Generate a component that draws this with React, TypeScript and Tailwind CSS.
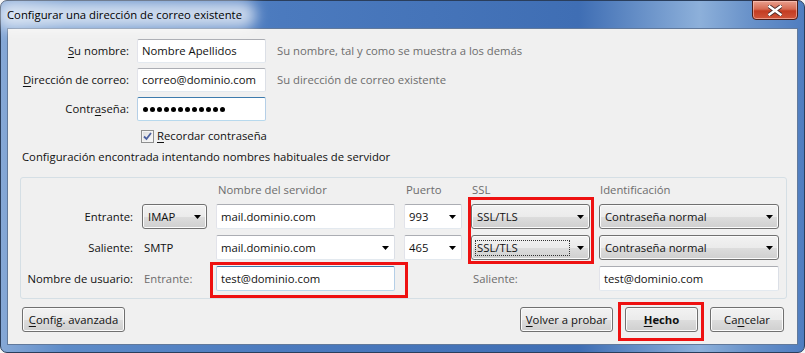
import React from "react";

const btnBg =
  "border border-[#707070] rounded-[3px] bg-[linear-gradient(180deg,#f2f2f2_0%,#ebebeb_50%,#dddddd_51%,#cfcfcf_100%)] shadow-[inset_0_0_0_1px_#fbfbfb]";
const textBox =
  "bg-white border border-[#abadb3] border-l-[#e2e3ea] border-r-[#dbdfe6] border-b-[#e3e9ef] rounded-[2px]";
const focusBox =
  "bg-white border border-[#3d7bad] border-l-[#b5cfe7] border-r-[#b5cfe7] border-b-[#b7d9ed] rounded-[2px]";

function Arrow() {
  return (
    <svg width="7" height="4" viewBox="0 0 7 4" className="shrink-0">
      <path d="M0 0H7L3.5 4Z" fill="#000" />
    </svg>
  );
}

function U({ children }: { children: React.ReactNode }) {
  return <span className="underline underline-offset-2">{children}</span>;
}

function SelectBtn({ text, focus }: { text: string; focus?: boolean }) {
  return (
    <div className={`h-full flex items-center justify-between pl-[3px] pr-[5px] ${btnBg}`}>
      {focus ? (
        <span className="h-[16px] w-[95px] flex items-center pl-[1px] border border-dotted border-[#333]">
          {text}
        </span>
      ) : (
        <span className="pl-[2px]">{text}</span>
      )}
      <Arrow />
    </div>
  );
}

function Combo({ text }: { text: string }) {
  return (
    <div className={`h-full flex items-center justify-between pl-[4px] pr-[5px] ${textBox}`}>
      <span>{text}</span>
      <Arrow />
    </div>
  );
}

function Input({ text, focus, className = "" }: { text: string; focus?: boolean; className?: string }) {
  return (
    <div className={`h-full flex items-center pl-[4px] whitespace-nowrap ${focus ? focusBox : textBox} ${className}`}>
      {text}
    </div>
  );
}

function Button({ children, w, bold }: { children: React.ReactNode; w: string; bold?: boolean }) {
  return (
    <div className={`h-[25px] ${w} flex items-center justify-center ${btnBg} ${bold ? "font-bold" : ""}`}>
      {children}
    </div>
  );
}

export default function App() {
  return (
    <div className="w-[805px] h-[353px] bg-[#f4f4f4] relative overflow-hidden text-[11.3px] leading-[16px] text-[#111] whitespace-nowrap font-['Open_Sans','Segoe_UI',sans-serif]">
      <div className="w-full h-full rounded-[7px] border border-[#2a3e5c] bg-[linear-gradient(90deg,#86a8d6_0%,#5d8bc8_8%,#4b7abe_35%,#3f6eb4_72%,#8db0da_87%,#6a93ca_93%,#4f7dc0_100%)] flex flex-col">
        {/* title bar */}
        <div className="h-[27px] shrink-0 flex items-start justify-between relative">
          <div className="relative ml-[6px] mt-[6px]">
            <div className="absolute -left-[10px] -right-[14px] -top-[6px] -bottom-[6px] rounded-[14px] bg-white/70 blur-[7px]" />
            <span className="relative text-[#000]">Configurar una dirección de correo existente</span>
          </div>
          <div className="mr-[6px] -mt-[1px] w-[46px] h-[20px] rounded-b-[4px] border border-[#4b1d18] bg-[linear-gradient(180deg,#e9a08e_0%,#d66a52_45%,#c33c22_55%,#d0553a_100%)] shadow-[inset_0_0_0_1px_rgba(255,210,200,0.55)] flex items-center justify-center">
            <svg width="14" height="11" viewBox="0 0 14 11">
              <path
                d="M1.5 1.5L12.5 9.5M12.5 1.5L1.5 9.5"
                stroke="#4a2a28"
                strokeWidth="4.2"
                strokeLinecap="square"
              />
              <path
                d="M1.5 1.5L12.5 9.5M12.5 1.5L1.5 9.5"
                stroke="#fff"
                strokeWidth="2.4"
                strokeLinecap="square"
              />
            </svg>
          </div>
        </div>

        {/* client */}
        <div className="mx-[6px] mb-[7px] flex-1 bg-[#f0f0f0] border border-[#61799b] flex flex-col pl-[12px] pr-[10px] pt-[10px]">
          {/* top form */}
          <div className="pl-[2px] flex flex-col gap-[5px]">
            <div className="flex items-center h-[24px]">
              <div className="w-[107px] text-right"><U>S</U>u nombre:</div>
              <div className="ml-[8px] w-[129px] h-full"><Input text="Nombre Apellidos" /></div>
              <div className="ml-[11px] text-[#6d6d6d]">Su nombre, tal y como se muestra a los demás</div>
            </div>
            <div className="flex items-center h-[24px]">
              <div className="w-[107px] text-right"><U>D</U>irección de correo:</div>
              <div className="ml-[8px] w-[129px] h-full"><Input text="correo@dominio.com" /></div>
              <div className="ml-[11px] text-[#6d6d6d]">Su dirección de correo existente</div>
            </div>
            <div className="flex items-center h-[24px]">
              <div className="w-[107px] text-right">Contr<U>a</U>seña:</div>
              <div className="ml-[8px] w-[129px] h-full">
                <div className={`h-full flex items-center pl-[5px] gap-[2px] ${focusBox}`}>
                  {Array.from({ length: 12 }).map((_, i) => (
                    <span key={i} className="w-[5px] h-[5px] rounded-full bg-black" />
                  ))}
                </div>
              </div>
            </div>
          </div>

          {/* checkbox */}
          <div className="pl-[2px] mt-[8px] flex items-center h-[14px]">
            <div className="ml-[119px] w-[13px] h-[13px] border border-[#8e8f8f] bg-[linear-gradient(135deg,#dcdcdc,#fbfbfb)] shadow-[inset_0_0_0_1px_#f4f4f4] flex items-center justify-center">
              <svg width="9" height="9" viewBox="0 0 9 9">
                <path d="M1 4.5L3.5 7L8 1" stroke="#4c61a0" strokeWidth="1.8" fill="none" />
              </svg>
            </div>
            <span className="ml-[3px]"><U>R</U>ecordar contraseña</span>
          </div>

          <div className="pl-[2px] mt-[6px]">Configuración encontrada intentando nombres habituales de servidor</div>

          {/* group box */}
          <div className="mt-[12px] border border-[#d5dfe5] rounded-[3px] pt-[4px] pb-[7px] pr-[6px] grid grid-cols-[112px_65px_179px_58px_119px_180px] gap-x-[9px] grid-rows-[16px_25px_25px_25px] gap-y-[6px] [&>*:nth-child(-n+6)]:-mb-[1px]">
            <div />
            <div />
            <div className="text-[#6d6d6d] pl-[2px]">Nombre del servidor</div>
            <div className="text-[#6d6d6d] pl-[2px]">Puerto</div>
            <div className="text-[#6d6d6d] pl-[1px]">SSL</div>
            <div className="text-[#6d6d6d] pl-[1px]">Identificación</div>

            <div className="flex items-center justify-end">Entrante:</div>
            <SelectBtn text="IMAP" />
            <Input text="mail.dominio.com" />
            <Combo text="993" />
            <SelectBtn text="SSL/TLS" />
            <SelectBtn text="Contraseña normal" />

            <div className="flex items-center justify-end">Saliente:</div>
            <div className="flex items-center pl-[2px]">SMTP</div>
            <Combo text="mail.dominio.com" />
            <Combo text="465" />
            <SelectBtn text="SSL/TLS" focus />
            <SelectBtn text="Contraseña normal" />

            <div className="flex items-center justify-end">Nombre de usuario:</div>
            <div className="flex items-center pl-[2px] text-[#6d6d6d]">Entrante:</div>
            <Input text="test@dominio.com" focus />
            <div />
            <div className="flex items-center pl-[2px] text-[#6d6d6d]">Saliente:</div>
            <Input text="test@dominio.com" />
          </div>

          {/* buttons */}
          <div className="mt-[8px] flex items-center pl-[2px] pr-[3px]">
            <Button w="w-[103px]"><span><U>C</U>onfig. avanzada</span></Button>
            <div className="flex-1" />
            <Button w="w-[93px]"><span><U>V</U>olver a probar</span></Button>
            <div className="w-[12px]" />
            <Button w="w-[73px]" bold><span><U>H</U>echo</span></Button>
            <div className="w-[12px]" />
            <Button w="w-[74px]"><span>Ca<U>n</U>celar</span></Button>
          </div>
        </div>
      </div>

      {/* annotation rectangles */}
      <div className="absolute left-[468px] top-[197px] w-[126px] h-[67px] border-[3px] border-[#ee1111]" />
      <div className="absolute left-[210px] top-[262px] w-[198px] h-[36px] border-[3px] border-[#ee1111]" />
      <div className="absolute left-[618px] top-[302px] w-[86px] h-[39px] border-[3px] border-[#ee1111]" />
    </div>
  );
}
